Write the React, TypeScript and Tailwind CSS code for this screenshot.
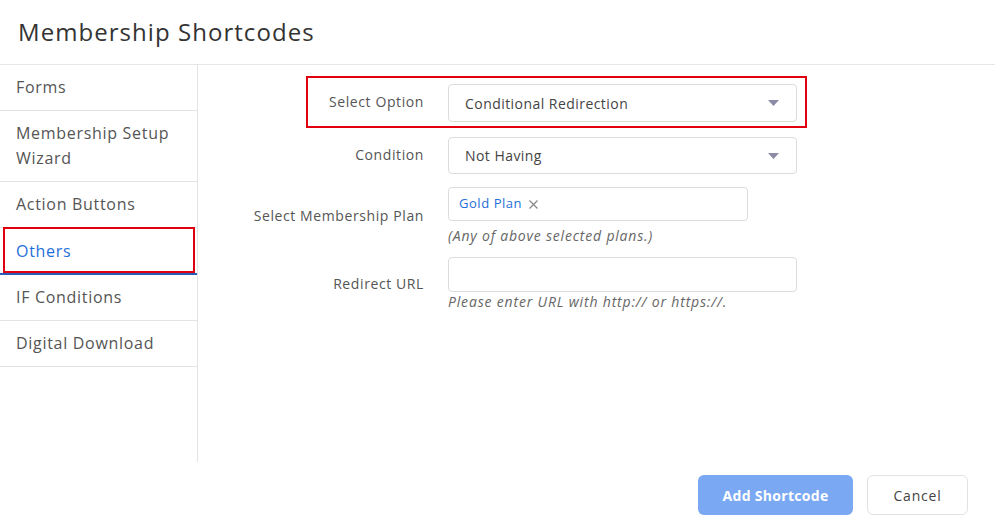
import React from "react";

const Caret = () => (
  <svg width="11" height="6" viewBox="0 0 11 6" className="absolute right-[17px] top-1/2 -translate-y-1/2">
    <path d="M0 0 H11 L5.5 6 Z" fill="#8b8ba6" />
  </svg>
);

export default function App() {
  const items = ["Forms", "Membership Setup Wizard", "Action Buttons", "Others", "IF Conditions", "Digital Download"];
  return (
    <div className="w-[995px] h-[525px] bg-white flex flex-col font-['Open_Sans',sans-serif] text-[#555]">
      <header className="h-[65px] shrink-0 border-b border-[#e6e6e6] flex items-center px-[18px]">
        <h1 className="text-[24px] text-[#333] tracking-[1.05px]">Membership Shortcodes</h1>
      </header>
      <div className="flex h-[397px] shrink-0">
        <aside className="w-[198px] shrink-0 border-r border-[#e3e3e3] tracking-[0.7px]">
          {items.map((it) =>
            it === "Others" ? (
              <div key={it} className="relative h-[47px] border-b-2 border-[#2a5bb8] flex items-center px-[16px] text-[16px] text-[#1e6fd9]">
                {it}
                <div className="absolute left-[3px] top-[-1px] w-[192px] h-[46px] border-2 border-[#e0000f]" />
              </div>
            ) : (
              <div
                key={it}
                className={`border-b border-[#e3e3e3] px-[16px] text-[16px] leading-[25px] flex items-center ${
                  it === "Membership Setup Wizard" ? "h-[71px] pr-[20px]" : "h-[46px]"
                }`}
              >
                {it}
              </div>
            )
          )}
        </aside>
        <main className="flex-1 pt-[19px] text-[14px]">
          <div className="relative flex items-center h-[38px]">
            <div className="w-[226px] text-right tracking-[0.6px] -mt-[4px]">Select Option</div>
            <div className="relative ml-[24px] w-[349px] h-[38px] border border-[#dcdcdc] rounded-[4px] flex items-center px-[16px] text-[#444] tracking-[0.45px]">
              Conditional Redirection
              <Caret />
            </div>
            <div className="absolute left-[108px] top-[-8px] w-[501px] h-[52px] border-2 border-[#e0000f]" />
          </div>
          <div className="flex items-center mt-[15px] h-[37px]">
            <div className="w-[226px] text-right tracking-[0.6px] -mt-[3px]">Condition</div>
            <div className="relative ml-[24px] w-[349px] h-[37px] border border-[#dcdcdc] rounded-[4px] flex items-center px-[16px] text-[#444] tracking-[0.45px]">
              Not Having
              <Caret />
            </div>
          </div>
          <div className="flex items-center mt-[13px]">
            <div className="w-[226px] text-right tracking-[0.6px] -mt-[2px]">Select Membership Plan</div>
            <div className="ml-[24px]">
              <div className="w-[300px] h-[34px] border border-[#dcdcdc] rounded-[4px] flex items-center px-[10px] text-[13px] text-[#1e6fd9] tracking-[0.55px]">
                Gold Plan
                <svg width="9" height="9" viewBox="0 0 9 9" className="ml-[7px]">
                  <path d="M0.5 0.5 L8.5 8.5 M8.5 0.5 L0.5 8.5" stroke="#8a8a8a" strokeWidth="1.3" />
                </svg>
              </div>
              <div className="italic text-[14px] mt-[6px] leading-[18px] text-[#666] tracking-[0.8px]">(Any of above selected plans.)</div>
            </div>
          </div>
          <div className="flex items-center mt-[12px]">
            <div className="w-[226px] text-right tracking-[0.6px] -mt-[2px]">Redirect URL</div>
            <div className="ml-[24px]">
              <div className="w-[349px] h-[35px] border border-[#dcdcdc] rounded-[4px]" />
              <div className="italic text-[14px] mt-[1px] leading-[18px] text-[#666] tracking-[0.83px]">Please enter URL with http:// or https://.</div>
            </div>
          </div>
        </main>
      </div>
      <footer className="flex justify-end gap-[14px] pr-[27px] pt-[13px]">
        <button className="w-[155px] h-[40px] rounded-[6px] bg-[#7aa8f2] text-white font-bold text-[14px] tracking-[0.3px]">Add Shortcode</button>
        <button className="w-[101px] h-[40px] rounded-[6px] border border-[#e2e2e2] bg-white text-[#444] text-[14px] tracking-[0.8px]">Cancel</button>
      </footer>
    </div>
  );
}
